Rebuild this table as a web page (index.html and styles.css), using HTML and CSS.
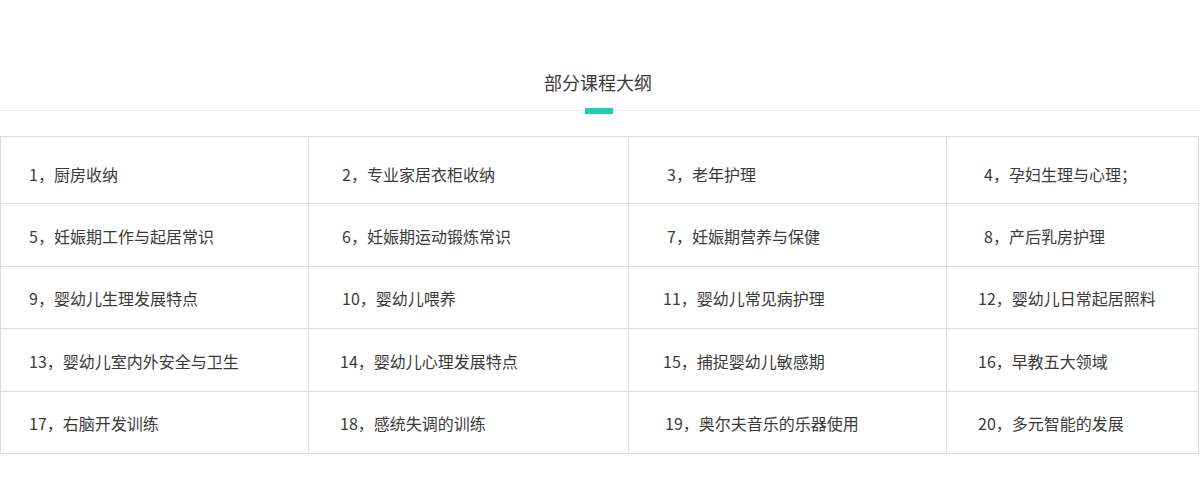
FILE: index.html
```html
<!DOCTYPE html>
<html lang="zh-CN">
<head>
<meta charset="utf-8">
<title>部分课程大纲</title>
<link rel="stylesheet" href="styles.css">
</head>
<body>
<section class="outline">
  <header class="outline-head">
    <h2 class="outline-title">部分课程大纲</h2>
    <div class="divider"><span class="divider-bar"></span></div>
  </header>
  <div class="grid">
    <div class="cell c1 r1">1，厨房收纳</div>
    <div class="cell c2 r1">2，专业家居衣柜收纳</div>
    <div class="cell c3 r1 one">3，老年护理</div>
    <div class="cell c4 r1 one">4，孕妇生理与心理；</div>

    <div class="cell c1">5，妊娠期工作与起居常识</div>
    <div class="cell c2">6，妊娠期运动锻炼常识</div>
    <div class="cell c3 one">7，妊娠期营养与保健</div>
    <div class="cell c4 one">8，产后乳房护理</div>

    <div class="cell c1">9，婴幼儿生理发展特点</div>
    <div class="cell c2">10，婴幼儿喂养</div>
    <div class="cell c3">11，婴幼儿常见病护理</div>
    <div class="cell c4">12，婴幼儿日常起居照料</div>

    <div class="cell c1">13，婴幼儿室内外安全与卫生</div>
    <div class="cell c2 tight">14，婴幼儿心理发展特点</div>
    <div class="cell c3">15，捕捉婴幼儿敏感期</div>
    <div class="cell c4">16，早教五大领域</div>

    <div class="cell c1">17，右脑开发训练</div>
    <div class="cell c2 tight">18，感统失调的训练</div>
    <div class="cell c3 mid">19，奥尔夫音乐的乐器使用</div>
    <div class="cell c4">20，多元智能的发展</div>
  </div>
</section>
</body>
</html>
```

FILE: styles.css
```css
* {
  box-sizing: border-box;
}

html, body {
  margin: 0;
  padding: 0;
  background: #ffffff;
}

body {
  font-family: "Noto Sans CJK SC", "Noto Sans", sans-serif;
  color: #3a3a3a;
}

.outline {
  width: 1199px;
}

.outline-head {
  padding-top: 70px;
}

.outline-title {
  margin: 0;
  padding-right: 3px;
  font-size: 18px;
  line-height: 24px;
  font-weight: normal;
  text-align: center;
  color: #3a3a3a;
}

.divider {
  position: relative;
  margin-top: 16px;
  height: 1px;
  background: #eeeeee;
}

.divider-bar {
  position: absolute;
  left: 585px;
  top: -2px;
  width: 28px;
  height: 6px;
  background: #1ccfae;
}

.grid {
  margin-top: 25px;
  display: grid;
  grid-template-columns: 307px 319px 317px 251px;
  grid-template-rows: 66px 62px 61px 62px 61px;
  gap: 1px;
  background: #dddddd;
  border: 1px solid #dddddd;
}

.cell {
  background: #ffffff;
  display: flex;
  align-items: center;
  padding-top: 1px;
  font-size: 16px;
  line-height: 22px;
  color: #3a3a3a;
  white-space: nowrap;
}

.cell.r1 {
  padding-top: 8px;
}

.c1 {
  padding-left: 28px;
}

.c2 {
  padding-left: 33px;
}

.c2.tight {
  padding-left: 31px;
}

.c3 {
  padding-left: 34px;
}

.c3.mid {
  padding-left: 36px;
}

.c3.one {
  padding-left: 38px;
}

.c4 {
  padding-left: 31px;
}

.c4.one {
  padding-left: 37px;
}
```
